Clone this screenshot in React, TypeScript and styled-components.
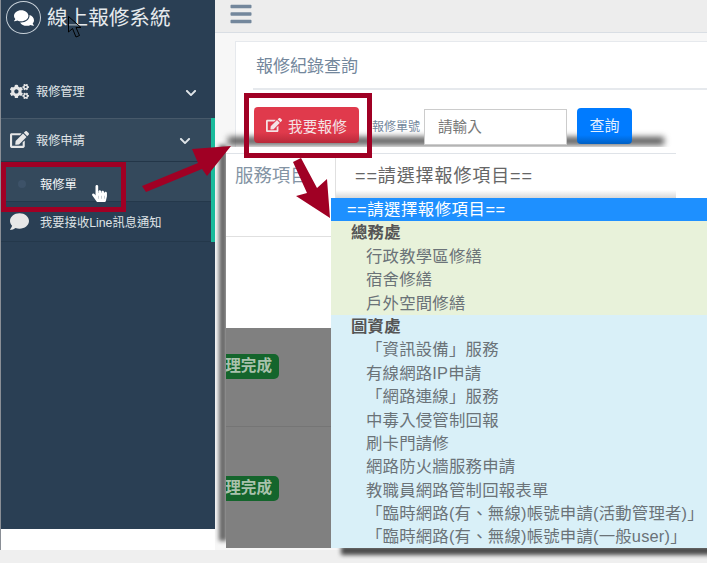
import React from "react";
import styled, { createGlobalStyle } from "styled-components";
import { FaCogs, FaEdit, FaComment, FaComments, FaChevronDown, FaBars, FaHandPointer } from "react-icons/fa";

const GlobalStyle = createGlobalStyle`
  html, body {
    margin: 0;
    padding: 0;
    background: #fff;
    font-family: "Liberation Sans", "Noto Sans CJK TC", sans-serif;
    overflow: hidden;
  }
  * { box-sizing: border-box; }
`;

const Page = styled.div`
  position: relative;
  width: 707px;
  height: 563px;
  display: flex;
  flex-direction: column;
  overflow: hidden;
  background: #fff;
`;

const Body = styled.div`
  height: 550px;
  display: flex;
  border-left: 1px solid #8a8f96;
`;

const FooterBand = styled.div`
  height: 13px;
  background: #efefef;
`;

const Sidebar = styled.aside`
  width: 214px;
  height: 529px;
  flex-shrink: 0;
  background: #2a3f54;
  display: flex;
  flex-direction: column;
`;

const Brand = styled.div`
  display: flex;
  align-items: center;
  gap: 6px;
  height: 34px;
  padding: 1px 0 0 5px;
  color: #e6eaed;
  font-size: 20.6px;
`;

const BrandRing = styled.div`
  width: 35px;
  height: 33px;
  border: 1px solid #c9d2da;
  border-radius: 50%;
  display: flex;
  align-items: center;
  justify-content: center;
  font-size: 20px;
  color: #fff;
`;

const BrandName = styled.span`
  margin-top: -3px;
`;

const Menu = styled.nav`
  margin-top: 34px;
  display: flex;
  flex-direction: column;
`;

const MenuRow = styled.div<{ $active?: boolean }>`
  height: ${(p) => (p.$active ? "44px" : "50px")};
  display: flex;
  align-items: center;
  padding: ${(p) => (p.$active ? "0 20px 1px 9px" : "0 18px 4px 9px")};
  color: #dfe3e6;
  font-size: 12.2px;
  gap: 7px;
  background: ${(p) => (p.$active ? "#34495c" : "transparent")};
  border-top: ${(p) => (p.$active ? "1px solid #47596a" : "0")};
  border-bottom: ${(p) => (p.$active ? "1px solid #233648" : "0")};
`;

const MenuIcon = styled.span`
  display: flex;
  font-size: 19px;
  color: #e7e7e7;
`;

const MenuLabel = styled.span`
  flex: 1;
`;

const Chevron = styled.span`
  display: flex;
  margin-top: 3px;
  font-size: 12px;
  color: #dfe4e8;
`;

const ActiveGroup = styled.div`
  border-right: 4px solid #1abb9c;
  display: flex;
  flex-direction: column;
`;

const SubRow = styled.div<{ $current?: boolean }>`
  height: 40px;
  display: flex;
  align-items: center;
  font-size: 12.3px;
  color: ${(p) => (p.$current ? "#f2f4f6" : "#dfe3e6")};
  padding: ${(p) => (p.$current ? "4px 0 0 17px" : "0 0 0 9px")};
  background: ${(p) => (p.$current ? "#34495c" : "transparent")};
  border-bottom: 1px solid #24384b;
`;

const Dot = styled.span`
  width: 8px;
  height: 8px;
  border-radius: 50%;
  background: #3d5268;
  margin-right: 14px;
`;

const BubbleIcon = styled.span`
  display: flex;
  font-size: 19px;
  color: #e7e7e7;
  margin-right: 11px;
`;

const Main = styled.main`
  flex: 1;
  display: flex;
  flex-direction: column;
  background: #f7f7f7;
`;

const TopBar = styled.header`
  height: 33px;
  background: #ededed;
  border-bottom: 1px solid #d9dee4;
  padding: 2px 0 0 14px;
  color: #73879c;
  font-size: 24px;
  line-height: 0;
`;

const Card = styled.section`
  margin: 8px 0 0 20px;
  background: #fff;
  border: 1px solid #e6e9ed;
  border-right: 0;
  height: 300px;
  padding: 0 0 0 17px;
`;

const CardTitle = styled.h2`
  margin: 0;
  height: 48px;
  padding: 10px 0 0 3px;
  font-size: 17px;
  font-weight: 400;
  color: #73879c;
  border-bottom: 2px solid #e6e9ed;
`;

const Toolbar = styled.div`
  position: relative;
  z-index: 1;
  display: flex;
  align-items: flex-start;
  padding: 17px 0 0 1px;
`;

const RepairButton = styled.button`
  width: 105px;
  height: 36px;
  border: 0;
  border-radius: 4px;
  background: linear-gradient(#e03a4c 70%, #b82a3a);
  color: #f4e3e5;
  font: inherit;
  font-size: 14.6px;
  letter-spacing: 0.2px;
  display: flex;
  align-items: center;
  justify-content: center;
  gap: 6px;
`;

const SearchLabel = styled.label`
  font-size: 12px;
  color: #73879c;
  margin: 10px 0 0 13px;
  width: 52px;
`;

const SearchInput = styled.div`
  width: 143px;
  height: 36px;
  margin-top: 2px;
  border: 1px solid #ccc;
  background: #fff;
  padding: 0 0 4px 13px;
  display: flex;
  align-items: center;
  color: #777;
  font-size: 14.6px;
`;

const SearchButton = styled.button`
  width: 55px;
  height: 36px;
  margin: 1px 0 0 10px;
  padding: 0 0 4px;
  border: 0;
  border-radius: 4px;
  background: linear-gradient(#007bff 75%, #0060c4);
  color: #e4f0ff;
  font: inherit;
  font-size: 15px;
`;

/* the shadows of the modal, they fall on the page behind it */
const ShadowTop = styled.div`
  position: absolute;
  left: 228px;
  top: 137px;
  width: 436px;
  height: 8px;
  background: #555;
  filter: blur(3px);
`;

const ShadowLeft = styled.div`
  position: absolute;
  left: 219px;
  top: 145px;
  width: 8px;
  height: 396px;
  background: #666;
  filter: blur(2px);
`;

const ShadowBottom = styled.div`
  position: absolute;
  left: 341px;
  top: 546px;
  width: 380px;
  height: 9px;
  background: #4a4a4a;
  filter: blur(2px);
`;

const Modal = styled.div`
  position: absolute;
  left: 226px;
  top: 147px;
  width: 481px;
  height: 401px;
  background: #808080;
`;

const ModalForm = styled.div`
  background: #fff;
  height: 181px;
  padding-top: 6px;
`;

const FormRow = styled.div`
  width: 450px;
  height: 84px;
  display: flex;
  border-top: 1px solid #dfe3e8;
  border-bottom: 1px solid #e0e0e0;
`;

const FormLabel = styled.div`
  width: 110px;
  padding: 7px 0 0 9px;
  font-size: 18.4px;
  color: #8494a4;
  border-right: 1px solid #e0e0e0;
  white-space: nowrap;
  overflow: hidden;
`;

const FormValue = styled.div`
  flex: 1;
  padding: 7px 0 0 19px;
  font-size: 18px;
  letter-spacing: 0.9px;
  color: #666;
  background: linear-gradient(#fff 36px, #d8d8d8 44px, #fff 44px);
`;

const ResultRow = styled.div<{ $top: number; $height: number; $line?: boolean }>`
  height: ${(p) => p.$height}px;
  padding-top: ${(p) => p.$top}px;
  border-bottom: ${(p) => (p.$line ? "1px solid #757575" : "0")};
`;

const Status = styled.div`
  width: 53px;
  height: 25px;
  background: #14652c;
  border-radius: 0 5px 5px 0;
  color: #a9c2ad;
  font-size: 15.6px;
  font-weight: 700;
  line-height: 24px;
  padding-right: 7px;
  overflow: hidden;
  white-space: nowrap;
  direction: rtl;
`;

const Dropdown = styled.ul`
  position: absolute;
  left: 331px;
  top: 198px;
  width: 376px;
  height: 350px;
  margin: 0;
  padding: 0;
  list-style: none;
  overflow: hidden;
  font-size: 16.4px;
  letter-spacing: 0.2px;
`;

const Group = styled.li<{ $bg: string }>`
  background: ${(p) => p.$bg};
`;

const GroupItems = styled.ul`
  margin: 0;
  padding: 0;
  list-style: none;
`;

const Option = styled.li<{ $selected?: boolean; $head?: boolean }>`
  height: 23.4px;
  line-height: 23.4px;
  white-space: nowrap;
  padding-left: ${(p) => (p.$selected ? "16px" : p.$head ? "20px" : "35px")};
  font-weight: ${(p) => (p.$head ? 700 : 400)};
  letter-spacing: ${(p) => (p.$selected ? "0.5px" : "inherit")};
  background: ${(p) => (p.$selected ? "#1e90ff" : "transparent")};
  color: ${(p) => (p.$selected ? "#fff" : p.$head ? "#555" : "#6b7378")};
`;

const Annotations = styled.svg`
  position: absolute;
  left: 0;
  top: 0;
  pointer-events: none;
`;

const ArrowCursor = styled.svg`
  position: absolute;
  left: 67px;
  top: 15px;
`;

const HandCursor = styled.span`
  position: absolute;
  left: 91px;
  top: 185px;
  font-size: 17px;
  line-height: 0;
  color: #fff;
`;

const groupOne = ["行政教學區修繕", "宿舍修繕", "戶外空間修繕"];
const groupTwo = [
  "「資訊設備」服務",
  "有線網路IP申請",
  "「網路連線」服務",
  "中毒入侵管制回報",
  "刷卡門請修",
  "網路防火牆服務申請",
  "教職員網路管制回報表單",
  "「臨時網路(有、無線)帳號申請(活動管理者)」",
  "「臨時網路(有、無線)帳號申請(一般user)」",
];

export default function App() {
  return (
    <Page>
      <GlobalStyle />
      <Body>
        <Sidebar>
          <Brand>
            <BrandRing>
              <FaComments />
            </BrandRing>
            <BrandName>線上報修系統</BrandName>
          </Brand>
          <Menu>
            <MenuRow>
              <MenuIcon>
                <FaCogs />
              </MenuIcon>
              <MenuLabel>報修管理</MenuLabel>
              <Chevron>
                <FaChevronDown />
              </Chevron>
            </MenuRow>
            <ActiveGroup>
              <MenuRow $active>
                <MenuIcon>
                  <FaEdit />
                </MenuIcon>
                <MenuLabel>報修申請</MenuLabel>
                <Chevron>
                  <FaChevronDown />
                </Chevron>
              </MenuRow>
              <SubRow $current>
                <Dot />
                報修單
              </SubRow>
              <SubRow>
                <BubbleIcon>
                  <FaComment />
                </BubbleIcon>
                我要接收Line訊息通知
              </SubRow>
            </ActiveGroup>
          </Menu>
        </Sidebar>
        <Main>
          <TopBar>
            <FaBars />
          </TopBar>
          <Card>
            <CardTitle>報修紀錄查詢</CardTitle>
            <Toolbar>
              <RepairButton>
                <FaEdit size={16} />
                我要報修
              </RepairButton>
              <SearchLabel>報修單號</SearchLabel>
              <SearchInput>請輸入</SearchInput>
              <SearchButton>查詢</SearchButton>
            </Toolbar>
          </Card>
        </Main>
      </Body>
      <FooterBand />
      <ShadowTop />
      <ShadowLeft />
      <ShadowBottom />
      <Modal>
        <ModalForm>
          <FormRow>
            <FormLabel>服務項目</FormLabel>
            <FormValue>==請選擇報修項目==</FormValue>
          </FormRow>
        </ModalForm>
        <ResultRow $top={26} $height={99} $line>
          <Status>理完成</Status>
        </ResultRow>
        <ResultRow $top={49} $height={121}>
          <Status>理完成</Status>
        </ResultRow>
      </Modal>
      <Dropdown>
        <Option $selected>==請選擇報修項目==</Option>
        <Group $bg="#e8f2da">
          <Option $head>總務處</Option>
          <GroupItems>
            {groupOne.map((t) => (
              <Option key={t}>{t}</Option>
            ))}
          </GroupItems>
        </Group>
        <Group $bg="#d9f0f8">
          <Option $head>圖資處</Option>
          <GroupItems>
            {groupTwo.map((t) => (
              <Option key={t}>{t}</Option>
            ))}
          </GroupItems>
        </Group>
      </Dropdown>
      <Annotations width="707" height="563" viewBox="0 0 707 563">
        <g fill="none" stroke="#a00024" strokeWidth="5">
          <rect x="3.5" y="164.5" width="120" height="45" />
          <rect x="246.5" y="95.5" width="123" height="60" />
        </g>
        <g fill="#a00024">
          <path d="M142 186 L198 163 L192 149 L231 146 L207 176 L202 169 L146 192 Z" />
          <path d="M293 162 L301 158 L317 188 L327 179 L330 218 L296 196 L307 193 Z" />
        </g>
      </Annotations>
      <ArrowCursor width="16" height="24" viewBox="0 0 16 24">
        <path d="M1.5 1.5 L1.5 17 L5.5 13.5 L9 22 L12.5 20.5 L9 12.5 L14 12.5 Z" fill="#2a3f54" fillOpacity="0.5" stroke="#000" strokeWidth="1" />
      </ArrowCursor>
      <HandCursor>
        <FaHandPointer />
      </HandCursor>
    </Page>
  );
}
